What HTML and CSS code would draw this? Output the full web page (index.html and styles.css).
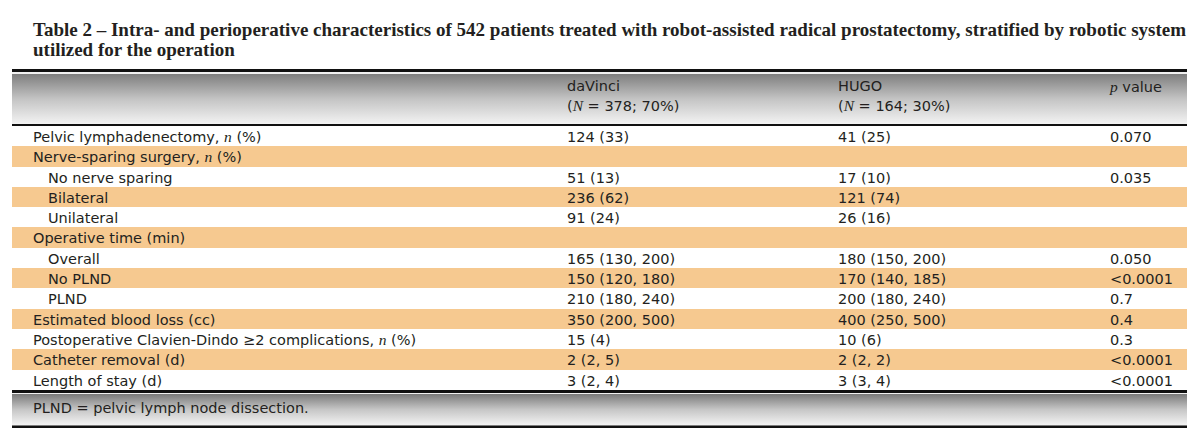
FILE: index.html
```html
<!DOCTYPE html>
<html>
<head>
<meta charset="utf-8">
<link rel="stylesheet" href="styles.css">
</head>
<body>
<div class="page">
  <h1 class="title">Table 2 – Intra- and perioperative characteristics of 542 patients treated with robot-assisted radical prostatectomy, stratified by robotic system<br>utilized for the operation</h1>
  <table class="tbl">
    <colgroup>
      <col class="c1"><col class="c2"><col class="c3"><col class="c4">
    </colgroup>
    <thead>
      <tr>
        <th></th>
        <th>daVinci<br>(<i class="it">N</i> = 378; 70%)</th>
        <th>HUGO<br>(<i class="it">N</i> = 164; 30%)</th>
        <th><i class="it">p</i> value</th>
      </tr>
    </thead>
    <tbody>
      <tr><td>Pelvic lymphadenectomy, <i class="it">n</i> (%)</td><td>124 (33)</td><td>41 (25)</td><td>0.070</td></tr>
      <tr class="hl"><td>Nerve-sparing surgery, <i class="it">n</i> (%)</td><td></td><td></td><td></td></tr>
      <tr><td class="ind">No nerve sparing</td><td>51 (13)</td><td>17 (10)</td><td>0.035</td></tr>
      <tr class="hl"><td class="ind">Bilateral</td><td>236 (62)</td><td>121 (74)</td><td></td></tr>
      <tr><td class="ind">Unilateral</td><td>91 (24)</td><td>26 (16)</td><td></td></tr>
      <tr class="hl"><td>Operative time (min)</td><td></td><td></td><td></td></tr>
      <tr><td class="ind">Overall</td><td>165 (130, 200)</td><td>180 (150, 200)</td><td>0.050</td></tr>
      <tr class="hl"><td class="ind">No PLND</td><td>150 (120, 180)</td><td>170 (140, 185)</td><td>&lt;0.0001</td></tr>
      <tr><td class="ind">PLND</td><td>210 (180, 240)</td><td>200 (180, 240)</td><td>0.7</td></tr>
      <tr class="hl"><td>Estimated blood loss (cc)</td><td>350 (200, 500)</td><td>400 (250, 500)</td><td>0.4</td></tr>
      <tr><td>Postoperative Clavien-Dindo ≥2 complications, <i class="it">n</i> (%)</td><td>15 (4)</td><td>10 (6)</td><td>0.3</td></tr>
      <tr class="hl"><td>Catheter removal (d)</td><td>2 (2, 5)</td><td>2 (2, 2)</td><td>&lt;0.0001</td></tr>
      <tr><td>Length of stay (d)</td><td>3 (2, 4)</td><td>3 (3, 4)</td><td>&lt;0.0001</td></tr>
    </tbody>
    <tfoot>
      <tr><td colspan="4">PLND = pelvic lymph node dissection.</td></tr>
    </tfoot>
  </table>
</div>
</body>
</html>
```

FILE: styles.css
```css
html, body {
  margin: 0;
  padding: 0;
  background: #ffffff;
}
.page {
  padding: 0 0 0 12px;
  color: #231f20;
}
.title {
  margin: 0;
  padding: 20px 0 0 21px;
  font-family: "Liberation Serif", serif;
  font-weight: bold;
  font-size: 19px;
  line-height: 20px;
  height: 49px;
  box-sizing: border-box;
  white-space: nowrap;
}
.tbl {
  width: 1175px;
  border-collapse: collapse;
  table-layout: fixed;
  font-family: "DejaVu Sans", sans-serif;
  font-size: 14.5px;
  margin-top: 20px;
}
.c1 { width: 555px; }
.c2 { width: 271px; }
.c3 { width: 272px; }
.c4 { width: 77px; }
.tbl thead tr {
  background: linear-gradient(to bottom, #7e7e7e 0%, #c4c4c4 50%, #f3f3f3 100%);
  border-top: 3px solid #111;
  border-bottom: 2px solid #111;
}
.tbl th {
  text-align: left;
  font-weight: normal;
  vertical-align: top;
  padding: 5px 0 0 0;
  height: 47px;
  line-height: 19px;
}
.tbl td {
  padding: 2px 0 0 0;
  line-height: 18.3px;
  text-align: left;
  white-space: nowrap;
}
.tbl td:first-child {
  padding-left: 21px;
}
.tbl td.ind {
  padding-left: 36px;
}
.tbl tr.hl {
  background: #f6c990;
}
.it {
  font-family: "Liberation Serif", serif;
  font-style: italic;
  font-size: 15.5px;
}
.tbl tfoot tr {
  background: linear-gradient(to bottom, #7a7a7a 0%, #c6c6c6 50%, #f3f3f3 100%);
  border-top: 3px solid #111;
  border-bottom: 2px solid #111;
}
.tbl tfoot td {
  padding: 6px 0 0 21px;
  height: 27px;
  vertical-align: top;
}
```
